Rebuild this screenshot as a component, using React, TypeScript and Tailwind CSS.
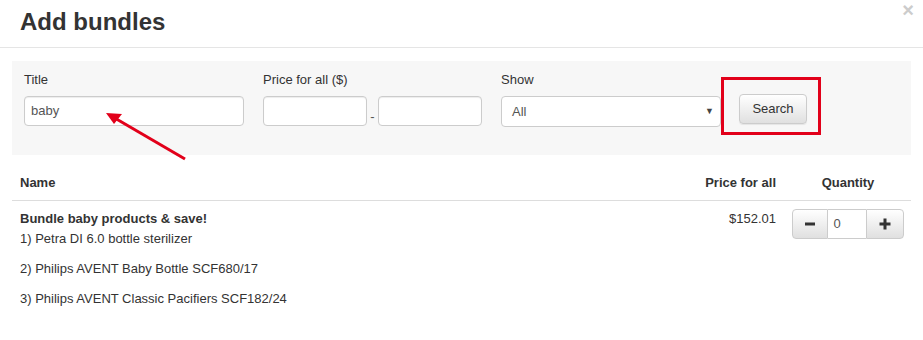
import React from "react";

const font = { fontFamily: '"Liberation Sans", Arial, sans-serif' };

function Minus() {
  return (
    <svg width="12" height="12" viewBox="0 0 12 12">
      <rect x="1" y="4.5" width="10" height="3" fill="#333" />
    </svg>
  );
}
function Plus() {
  return (
    <svg width="12" height="12" viewBox="0 0 12 12">
      <rect x="0.5" y="4.5" width="11" height="3" fill="#333" />
      <rect x="4.5" y="0.5" width="3" height="11" fill="#333" />
    </svg>
  );
}

export default function App() {
  return (
    <div className="relative w-[923px] h-[340px] bg-white text-[13px] text-[#333] overflow-hidden" style={font}>
      {/* header */}
      <div className="flex justify-between items-start h-[48px] border-b border-[#e5e5e5] pl-[20px] pr-[9px]">
        <h1 className="text-[24px] font-bold leading-[26px] mt-[9px] text-[#333]">Add bundles</h1>
        <span className="text-[20px] font-bold leading-[20px] mt-[0px] text-[#ccc]">×</span>
      </div>

      {/* filter panel */}
      <div className="mx-[12px] mt-[13px] h-[94px] bg-[#f7f7f7] px-[12px] pt-[10px] flex items-start">
        <div className="flex flex-col w-[220px]">
          <label className="h-[18px] leading-[18px] mb-[7px] text-[#333]">Title</label>
          <div className="h-[30px] rounded-[4px] border border-[#ccc] bg-white px-[6px] flex items-center text-[#555] shadow-[inset_0_1px_1px_rgba(0,0,0,0.075)]">baby</div>
        </div>
        <div className="flex flex-col ml-[19px]">
          <label className="h-[18px] leading-[18px] mb-[7px] text-[#333]">Price for all ($)</label>
          <div className="flex items-end">
            <div className="w-[104px] h-[30px] rounded-[4px] border border-[#ccc] bg-white shadow-[inset_0_1px_1px_rgba(0,0,0,0.075)]" />
            <span className="w-[11px] text-center text-[#555] leading-[14px] mb-[2px]">-</span>
            <div className="w-[104px] h-[30px] rounded-[4px] border border-[#ccc] bg-white shadow-[inset_0_1px_1px_rgba(0,0,0,0.075)]" />
          </div>
        </div>
        <div className="flex flex-col ml-[19px] w-[220px]">
          <label className="h-[18px] leading-[18px] mb-[7px] text-[#333]">Show</label>
          <div className="h-[31px] rounded-[4px] border border-[#ccc] bg-white pl-[10px] pr-[6px] flex items-center justify-between text-[#555]">
            <span className="mt-[1px]">All</span>
            <span className="text-[9px] text-[#444]">▼</span>
          </div>
        </div>
        <button className="ml-[18px] mt-[23px] w-[68px] h-[30px] rounded-[4px] border border-[#ccc] bg-gradient-to-b from-white to-[#e0e0e0] text-[#333] text-[13px] shadow-[inset_0_1px_0_rgba(255,255,255,0.15),0_1px_1px_rgba(0,0,0,0.075)]">
          Search
        </button>
      </div>

      {/* table */}
      <div className="mx-[12px] mt-[15px]">
        <div className="flex border-b border-[#ddd] h-[31px] items-start pt-[3px] leading-[20px] font-bold">
          <div className="flex-1 pl-[8px]">Name</div>
          <div className="w-[120px] text-right pr-[8px]">Price for all</div>
          <div className="w-[127px] text-center pl-[1px]">Quantity</div>
        </div>
        <div className="flex pt-[8px]">
          <div className="flex-1 pl-[8px]">
            <div className="font-bold leading-[20px]">Bundle baby products &amp; save!</div>
            <div className="leading-[20px]">1) Petra DI 6.0 bottle sterilizer</div>
            <div className="leading-[20px] mt-[10px]">2) Philips AVENT Baby Bottle SCF680/17</div>
            <div className="leading-[20px] mt-[10px]">3) Philips AVENT Classic Pacifiers SCF182/24</div>
          </div>
          <div className="w-[120px] text-right pr-[8px] leading-[20px]">$152.01</div>
          <div className="w-[127px] flex justify-center">
            <div className="flex h-[30px]">
              <div className="w-[36px] h-[30px] rounded-l-[4px] border border-[#ccc] bg-gradient-to-b from-white to-[#e0e0e0] flex items-center justify-center">
                <Minus />
              </div>
              <div className="w-[38px] h-[30px] border-y border-[#ccc] bg-white flex items-center pl-[6px] text-[#555]">0</div>
              <div className="w-[38px] h-[30px] rounded-r-[4px] border border-[#ccc] bg-gradient-to-b from-white to-[#e0e0e0] flex items-center justify-center">
                <Plus />
              </div>
            </div>
          </div>
        </div>
      </div>

      {/* annotations */}
      <div className="absolute left-[721px] top-[77px] w-[100px] h-[58px] border-[3px] border-[#e2001a]" />
      <svg className="absolute left-0 top-0" width="923" height="340">
        <line x1="185" y1="159" x2="113" y2="117" stroke="#e2001a" strokeWidth="3" />
        <polygon points="106,113 122,114 114,124" fill="#e2001a" />
      </svg>
    </div>
  );
}
